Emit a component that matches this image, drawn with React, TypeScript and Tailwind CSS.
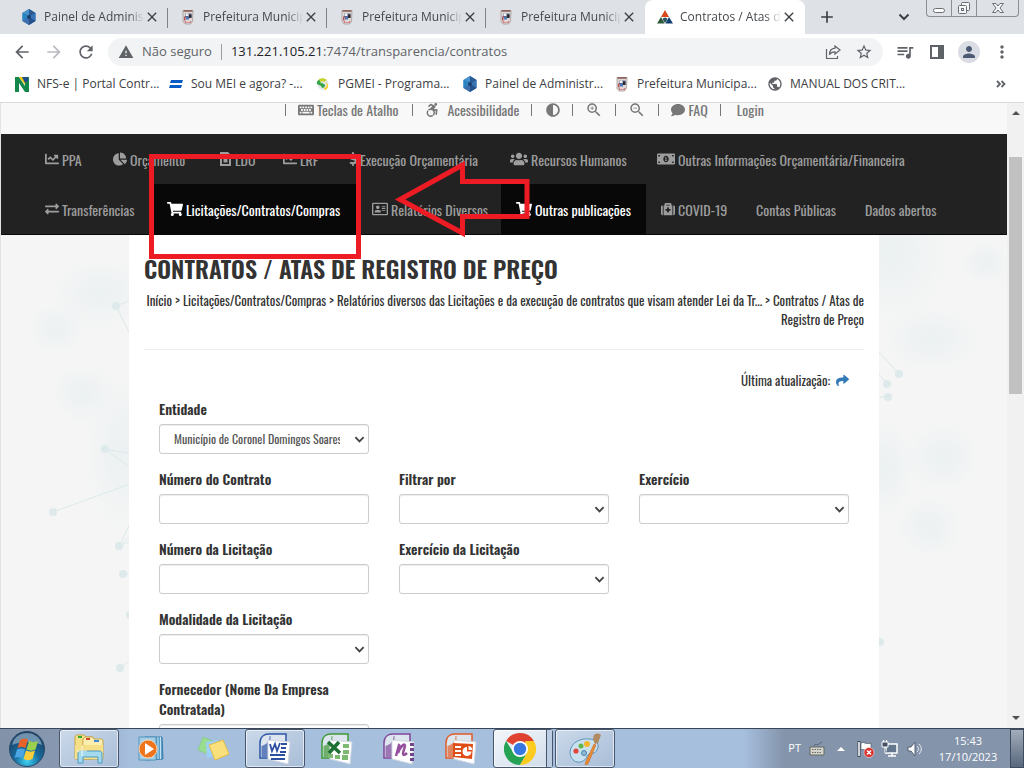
import type { ReactNode } from "react";
import {
  FaAccessibleIcon,
  FaAdjust,
  FaChartLine,
  FaChartPie,
  FaComment,
  FaDollarSign,
  FaExchangeAlt,
  FaKeyboard,
  FaMedkit,
  FaMoneyBillAlt,
  FaRegAddressCard,
  FaShare,
  FaShoppingCart,
  FaUsers,
} from "react-icons/fa";
import {
  MdAdd,
  MdArrowBack,
  MdArrowForward,
  MdClose,
  MdMoreVert,
  MdPerson,
  MdPublic,
  MdQueueMusic,
  MdRefresh,
  MdStarBorder,
  MdWarning,
  MdZoomIn,
  MdZoomOut,
} from "react-icons/md";

/* ---------- small drawings ---------- */

function HexIcon() {
  return (
    <svg viewBox="0 0 16 16" className="size-4 shrink-0">
      <path d="M8 0 1.500 4v8L8 16l6.500-4V4z" fill="#2a70b3" />
      <path d="M8 0v7L1.500 4z" fill="#4593cc" />
      <path d="M8 0v7l6.500-3z" fill="#2b5a94" />
      <path d="M14.500 4v8L8 8z" fill="#3b74b4" />
      <path d="M1.500 4v8L8 8z" fill="#2a86c2" />
      <path d="M8 16V8l-6.500 4z" fill="#3d6fae" />
      <path d="M8 16V8l6.500 4z" fill="#24508c" />
      <path d="M8 5.800 6.200 7v2L8 10.200 9.800 9V7z" fill="#1d3f6c" />
    </svg>
  );
}

function CrestIcon() {
  return (
    <svg viewBox="0 0 16 16" className="size-4 shrink-0">
      <path d="M3 1.500h10l-.500 11-2 2.500H5l-2-2.500z" fill="#ded9d6" stroke="#a39a97" strokeWidth=".8" />
      <path d="M3.500 1h9v1.800h-9z" fill="#8c6561" />
      <path d="M5 4.500h6.500v4H5z" fill="#5d6887" />
      <path d="M5.500 4.500h3v2.500h-3z" fill="#f2f4f8" />
      <path d="M9 5.500h2.500V9H9z" fill="#2d2b35" />
      <path d="M6 8h3v2.500H6z" fill="#4d77b8" />
      <path d="M4 7.500h1.500v4H4z" fill="#b4505a" />
      <path d="M4.500 12c2 1 5 1 7 0l-1 2h-5z" fill="#c25660" />
      <path d="M6 12.400h4v1H6z" fill="#f3eded" />
    </svg>
  );
}

function TriangleIcon() {
  return (
    <svg viewBox="0 0 16 16" className="size-4 shrink-0">
      <path d="M8 1l4 7H4z" fill="#d9481c" />
      <path d="M4 8l3.600 6.500H0z" fill="#2e5a3a" />
      <path d="M12 8l4 6.500H8.400z" fill="#10406f" />
      <path d="M5.600 9.500 8 8.500l2.400 1L9.500 12 8 14l-1.500-2z" fill="#2b5560" />
    </svg>
  );
}

function NIcon() {
  return (
    <svg viewBox="0 0 16 16" className="size-4 shrink-0">
      <path d="M1 1h4l6 9V1h4v15h-4L5 7v9H1z" fill="#13884a" />
      <path d="M5 1h7v9z" fill="#f2c500" />
      <path d="M8 1h6v4l-3 2z" fill="#1f4e8c" />
      <path d="M11 7h4v9h-4z" fill="#13884a" />
    </svg>
  );
}

function MeiIcon() {
  return (
    <svg viewBox="0 0 16 16" className="size-4 shrink-0">
      <path d="M3 4h12l-1 3H2zM2 9h12l-1 3H1z" fill="#0a5bc4" />
    </svg>
  );
}

function SimplesIcon() {
  return (
    <svg viewBox="0 0 16 16" className="size-4 shrink-0">
      <circle cx="8" cy="8.500" r="5.500" fill="#e4e8ea" />
      <path d="M2 8c-1-3 2-5 5-5L5.500 6.500 9 8c2 1 1 4-2 4l-1-2z" fill="#35a64a" />
      <path d="M4 3c2-1 6-1 8 1L9 6C7 5 6 5 5.500 7z" fill="#c7d42e" />
      <path d="M9 12c3 0 3-3 2-6 3 2 3 7-1 8z" fill="#f4cf22" />
    </svg>
  );
}

function ShareOut() {
  return (
    <svg viewBox="0 0 16 16" className="size-4" fill="none" stroke="#5f6368" strokeWidth="1.200">
      <path d="M1.500 5v9.500h11V12" />
      <path d="M10 2l5 4-5 4V7.800c-3 0-4.500 1-5.500 3 0-4 2-6.300 5.500-6.600z" />
    </svg>
  );
}

function LawIcon() {
  return (
    <svg viewBox="0 0 14 14" className="size-[14px]" fill="currentColor">
      <path d="M2 0h8l3 3v11H2zM4 4v8h7V4z" fillRule="evenodd" />
      <path d="M5.500 5.500h4v5h-4z" />
    </svg>
  );
}

function Chevron({ className }: { className: string }) {
  return (
    <svg viewBox="0 0 12 12" className={className} fill="none" stroke="currentColor" strokeWidth="2">
      <path d="M1.500 3.500 6 8l4.500-4.500" />
    </svg>
  );
}

/* ---------- browser chrome ---------- */

const tabs = [
  { title: "Painel de Adminis", icon: <HexIcon />, active: false },
  { title: "Prefeitura Municip", icon: <CrestIcon />, active: false },
  { title: "Prefeitura Municip", icon: <CrestIcon />, active: false },
  { title: "Prefeitura Municip", icon: <CrestIcon />, active: false },
  { title: "Contratos / Atas d", icon: <TriangleIcon />, active: true },
];

function TabStrip() {
  return (
    <div className="flex h-[34px] shrink-0 bg-[#dee1e6] pl-[9px]">
      {tabs.map((t, i) => (
        <div
          key={i}
          className={
            t.active
              ? "flex w-40 items-center rounded-t-lg bg-white pl-3 pr-2"
              : "relative flex w-[159px] items-center pl-3 pr-2"
          }
        >
          {t.icon}
          <span className="ml-[7px] min-w-0 flex-1 overflow-hidden whitespace-nowrap text-[12px] text-[#45494d] [mask-image:linear-gradient(to_right,black_84%,transparent)]">
            {t.title}
          </span>
          <button aria-label="Fechar guia" className="text-[#3c4043]">
            <MdClose className="size-4" />
          </button>
          {!t.active && i < 3 && <span className="absolute right-0 top-2 h-5 w-px bg-[#808387]" />}
        </div>
      ))}
      <button aria-label="Nova guia" className="ml-3 text-[#3c4043]">
        <MdAdd className="size-5" />
      </button>
      <button aria-label="Pesquisar guias" className="ml-auto mr-4 text-[#3c4043]">
        <Chevron className="size-3" />
      </button>
      <div className="mr-[5px] flex h-[17px] rounded-b border border-t-0 border-[#8b8e94] text-[#6b6e74]">
        <button aria-label="Minimizar" className="flex w-[25px] items-center justify-center border-r border-[#8b8e94]">
          <span className="mt-1 h-[5px] w-3 rounded-sm border border-[#6b6e74] bg-white" />
        </button>
        <button aria-label="Restaurar" className="flex w-[25px] items-center justify-center border-r border-[#8b8e94]">
          <svg viewBox="0 0 14 14" className="size-[14px]" fill="#f4f5f7" stroke="currentColor">
            <rect x="4.500" y="1.500" width="8" height="8" rx="1" />
            <rect x="1.500" y="4.500" width="8" height="8" rx="1" />
            <rect x="4.500" y="7.500" width="2" height="2" />
          </svg>
        </button>
        <button aria-label="Fechar" className="flex w-[41px] items-center justify-center">
          <svg viewBox="0 0 14 12" className="h-3 w-[14px]" fill="#f4f5f7" stroke="currentColor">
            <path d="M1.500 1.500h3.500l2 2.500 2-2.500h3.500L9 6l3.500 4.500H9L7 8l-2 2.500H1.500L5 6z" />
          </svg>
        </button>
      </div>
    </div>
  );
}

function Toolbar() {
  return (
    <div className="flex h-[36px] shrink-0 items-center pl-3 pr-3 text-[#5f6368]">
      <button aria-label="Voltar"><MdArrowBack className="size-5" /></button>
      <button aria-label="Avançar" className="ml-3 text-[#b9bbbe]"><MdArrowForward className="size-5" /></button>
      <button aria-label="Recarregar" className="ml-3"><MdRefresh className="size-5" /></button>
      <div className="ml-3 flex h-7 min-w-0 flex-1 items-center rounded-full bg-[#f1f3f4] pl-[10px] pr-[10px]">
        <MdWarning className="size-4 shrink-0" />
        <span className="ml-2 shrink-0 text-[13px]">Não seguro</span>
        <span className="mx-[9px] h-4 w-px shrink-0 bg-[#9a9da1]" />
        <span className="min-w-0 flex-1 truncate text-[13px]">
          <span className="text-[#202124]">131.221.105.21</span>:7474/transparencia/contratos
        </span>
        <button aria-label="Compartilhar"><ShareOut /></button>
        <button aria-label="Favorito" className="ml-[14px]"><MdStarBorder className="size-[18px]" /></button>
      </div>
      <button aria-label="Mídia" className="ml-3"><MdQueueMusic className="size-5" /></button>
      <button aria-label="Painel lateral" className="ml-[14px]">
        <svg viewBox="0 0 16 16" className="size-4">
          <path d="M1 1h14v14H1zM3 3v10h6V3z" fill="currentColor" fillRule="evenodd" />
        </svg>
      </button>
      <button aria-label="Perfil" className="ml-[13px] flex size-[22px] items-center justify-center rounded-full bg-[#dadde3] text-[#4c5a73]">
        <MdPerson className="size-[18px]" />
      </button>
      <button aria-label="Menu" className="ml-3"><MdMoreVert className="size-5" /></button>
    </div>
  );
}

const bookmarks = [
  { label: "NFS-e | Portal Contr...", icon: <NIcon />, width: "w-[154px]" },
  { label: "Sou MEI e agora? -...", icon: <MeiIcon />, width: "w-[147px]" },
  { label: "PGMEI - Programa...", icon: <SimplesIcon />, width: "w-[147px]" },
  { label: "Painel de Administr...", icon: <HexIcon />, width: "w-[152px]" },
  { label: "Prefeitura Municipa...", icon: <CrestIcon />, width: "w-[153px]" },
  { label: "MANUAL DOS CRIT...", icon: <MdPublic className="size-4 shrink-0 text-[#5f6368]" />, width: "w-[150px]" },
];

function BookmarkBar() {
  return (
    <div className="flex h-[33px] shrink-0 items-center border-b border-[#d8dadd] pb-1 pl-[14px] pr-[18px] text-[12px] text-[#3c4043]">
      {bookmarks.map((b) => (
        <a key={b.label} href="#" className={`${b.width} flex items-center gap-[7px] whitespace-nowrap`}>
          {b.icon}
          {b.label}
        </a>
      ))}
      <button aria-label="Mais favoritos" className="ml-auto text-[#5f6368]">
        <svg viewBox="0 0 10 10" className="size-[10px]" fill="none" stroke="currentColor" strokeWidth="1.800">
          <path d="M1 2l3 3-3 3M5.500 2l3 3-3 3" />
        </svg>
      </button>
    </div>
  );
}

/* ---------- site ---------- */

function AccessBar() {
  const sep = <span className="h-3 w-px bg-[#777]" />;
  return (
    <div className="h-[31px]">
      <div className="flex h-[14px] items-center gap-3 pl-[284px] text-[14px] leading-[14px] text-[#777]">
        {sep}
        <a href="#" className="flex items-center gap-[3px]"><FaKeyboard className="size-4" />Teclas de Atalho</a>
        <span className="ml-[2px] h-3 w-px bg-[#777]" />
        <a href="#" className="flex items-center gap-2"><FaAccessibleIcon className="size-[14px]" />Acessibilidade</a>
        {sep}
        <button aria-label="Contraste" className="ml-[2px]"><FaAdjust className="size-[14px]" /></button>
        {sep}
        <button aria-label="Aumentar fonte"><MdZoomIn className="size-[18px]" /></button>
        {sep}
        <button aria-label="Diminuir fonte"><MdZoomOut className="size-[18px]" /></button>
        {sep}
        <a href="#" className="flex items-center gap-[3px]"><FaComment className="size-[14px]" />FAQ</a>
        {sep}
        <a href="#" className="ml-1">Login</a>
      </div>
    </div>
  );
}

type NavItem = { label: string; icon?: ReactNode; active?: boolean; width: string };

const navRows: NavItem[][] = [
  [
    { label: "PPA", icon: <FaChartLine />, width: "w-[68px]" },
    { label: "Orçamento", icon: <FaChartPie />, width: "w-[105px]" },
    { label: "LDO", icon: <LawIcon />, width: "w-[65px]" },
    { label: "LRF", icon: <FaChartLine />, width: "w-[66px]" },
    { label: "Execução Orçamentária", icon: <FaDollarSign className="-mx-[3px]" />, width: "w-[161px]" },
    { label: "Recursos Humanos", icon: <FaUsers className="size-[18px]" />, width: "w-[147px]" },
    { label: "Outras Informações Orçamentária/Financeira", icon: <FaMoneyBillAlt className="size-[18px]" />, width: "w-[282px]" },
  ],
  [
    { label: "Transferências", icon: <FaExchangeAlt />, width: "w-[122px]" },
    { label: "Licitações/Contratos/Compras", icon: <FaShoppingCart className="size-4" />, active: true, width: "w-[205px]" },
    { label: "Relatórios Diversos", icon: <FaRegAddressCard className="size-4" />, width: "w-[144px]" },
    { label: "Outras publicações", icon: <FaShoppingCart className="size-4" />, active: true, width: "w-[145px]" },
    { label: "COVID-19", icon: <FaMedkit />, width: "w-[95px]" },
    { label: "Contas Públicas", width: "w-[109px]" },
    { label: "Dados abertos", width: "w-[102px]" },
  ],
];

function MainNav() {
  return (
    <nav className="border-b border-[#080808] bg-[#222] px-[29px]">
      {navRows.map((row, i) => (
        <ul key={i} className="flex h-[50px]">
          {row.map((n) => (
            <li key={n.label} className={n.width}>
              <a
                href="#"
                className={
                  n.active
                    ? "flex h-full items-center gap-[3px] whitespace-nowrap bg-[#080808] pl-[15px] text-[14px] text-white"
                    : "flex h-full items-center gap-[3px] whitespace-nowrap pl-[15px] text-[14px] text-[#9d9d9d]"
                }
              >
                {n.icon}
                {n.label}
              </a>
            </li>
          ))}
        </ul>
      ))}
    </nav>
  );
}

function Field({ id, label, options }: { id: string; label: string; options?: string[] }) {
  const box = "h-[30px] w-full rounded-[3px] border border-[#ccc] bg-white text-[12px] text-[#555] shadow-[inset_0_1px_1px_rgba(0,0,0,0.075)]";
  return (
    <div>
      <label htmlFor={id} className="mb-[5px] block text-[14px] font-semibold leading-5">{label}</label>
      {options ? (
        <div className="relative">
          <select id={id} className={`${box} appearance-none pl-[14px] pr-7`}>
            {options.map((o) => <option key={o}>{o}</option>)}
          </select>
          <Chevron className="pointer-events-none absolute right-1 top-[10px] size-[11px] text-[#444]" />
        </div>
      ) : (
        <input id={id} type="text" className={`${box} px-[10px]`} />
      )}
    </div>
  );
}

function Network() {
  return (
    <svg viewBox="0 0 1006 625" preserveAspectRatio="xMidYMin slice" className="absolute inset-0 size-full">
      <defs>
        <radialGradient id="haze">
          <stop offset="0" stopColor="#e8eff1" stopOpacity=".75" />
          <stop offset="1" stopColor="#e8eff1" stopOpacity="0" />
        </radialGradient>
      </defs>
      <g fill="url(#haze)">
        <ellipse cx="55" cy="226" rx="30" ry="26" />
        <ellipse cx="100" cy="190" rx="50" ry="36" />
        <ellipse cx="82" cy="291" rx="34" ry="30" />
        <ellipse cx="120" cy="350" rx="36" ry="80" />
        <ellipse cx="890" cy="150" rx="60" ry="70" />
        <ellipse cx="985" cy="160" rx="26" ry="22" />
        <ellipse cx="930" cy="236" rx="50" ry="34" />
        <ellipse cx="885" cy="365" rx="30" ry="50" />
        <ellipse cx="942" cy="354" rx="40" ry="36" />
        <ellipse cx="928" cy="424" rx="34" ry="32" />
      </g>
      <g stroke="#dce9e9" fill="none">
        <path d="M115 203l20 40M115 203l20-8M104 346l40 7M104 346l40 30M52 409l85-31M118 443l20-40M118 443l26-24M118 443l24-10M122 471h20M119 565l20-16M898 271l-30-33M886 281l-20-25M887 294h-20" />
      </g>
      <g fill="#dde9ea">
        <circle cx="115" cy="203" r="4" />
        <circle cx="104" cy="346" r="4" />
        <circle cx="52" cy="409" r="4" />
        <circle cx="118" cy="443" r="4" />
        <circle cx="122" cy="471" r="4" />
        <circle cx="129" cy="512" r="4" />
        <circle cx="119" cy="565" r="4" />
        <circle cx="898" cy="271" r="4" />
        <circle cx="886" cy="281" r="4" />
        <circle cx="887" cy="294" r="4" />
        <circle cx="879" cy="539" r="4" />
      </g>
    </svg>
  );
}

function Site() {
  return (
    <div className="relative min-w-0 flex-1 overflow-hidden border-l border-[#e2e3e4] bg-[#f5f5f5] font-['Oswald','Liberation_Sans_Narrow','Arial_Narrow',sans-serif] text-[#333]">
      <Network />
      <div className="relative">
        <div className="bg-[#f8f8f8]"><AccessBar /></div>
        <MainNav />
        <main className="mx-auto w-full max-w-[750px] bg-white px-[15px] pb-4 pt-5">
          <h1 className="text-[24px] font-semibold leading-[26px]">CONTRATOS / ATAS DE REGISTRO DE PREÇO</h1>
          <p className="mt-[10px] text-right text-[13px] leading-[19px]">
            <a href="#">Início</a> &gt; <a href="#">Licitações/Contratos/Compras</a> &gt;{" "}
            <a href="#">Relatórios diversos das Licitações e da execução de contratos que visam atender Lei da Tr...</a> &gt; Contratos / Atas de Registro de Preço
          </p>
          <hr className="mt-5 border-[#eee]" />
          <div className="px-[15px] pt-5">
            <p className="flex items-center justify-end gap-[6px] text-[13px] leading-5">
              Última atualização: <a href="#" aria-label="Atualizar"><FaShare className="size-[13px] text-[#337ab7]" /></a>
            </p>
            <form className="mt-[9px] grid grid-cols-3 gap-x-[30px] gap-y-[15px]">
              <Field id="entidade" label="Entidade" options={["Município de Coronel Domingos Soares"]} />
              <div className="col-span-2" />
              <Field id="contrato" label="Número do Contrato" />
              <Field id="filtrar" label="Filtrar por" options={[""]} />
              <Field id="exercicio" label="Exercício" options={[""]} />
              <Field id="licitacao" label="Número da Licitação" />
              <Field id="exlicitacao" label="Exercício da Licitação" options={[""]} />
              <div />
              <Field id="modalidade" label="Modalidade da Licitação" options={[""]} />
              <div className="col-span-2" />
              <Field id="fornecedor" label="Fornecedor (Nome Da Empresa Contratada)" />
            </form>
          </div>
        </main>
      </div>
    </div>
  );
}

function ScrollBar() {
  return (
    <div className="flex w-[17px] shrink-0 flex-col items-center bg-[#f1f1f1] py-2">
      <span className="border-x-4 border-b-4 border-x-transparent border-b-[#505050]" />
      <span className="mt-[42px] h-[237px] w-[13px] bg-[#c1c1c1]" />
      <span className="mt-auto border-x-4 border-t-4 border-x-transparent border-t-[#505050]" />
    </div>
  );
}

/* ---------- taskbar ---------- */

function StartOrb() {
  return (
    <svg viewBox="0 0 38 38" className="size-[38px]">
      <defs>
        <radialGradient id="orb" cx=".5" cy=".85" r=".8">
          <stop offset="0" stopColor="#3fd0f4" />
          <stop offset=".45" stopColor="#176a9c" />
          <stop offset="1" stopColor="#1c3f63" />
        </radialGradient>
      </defs>
      <circle cx="19" cy="19" r="17.500" fill="url(#orb)" stroke="#284a68" />
      <path d="M4 15C6 6 13 3 19 3s13 3 15 12c-9-4-21-4-30 0z" fill="#a9c5d8" opacity=".6" />
      <path d="M12 10c3-2 5-2 8-.500l-2.500 8.500c-3-1.500-5-1.500-8 0z" fill="#e8632a" />
      <path d="M21 11c3 1.500 6 1.500 9 0l-2.500 8.500c-3 1.500-6 1.500-9 0z" fill="#9bcf4c" />
      <path d="M9 19.500c3-1.500 5-1.500 8 0L14.500 28c-3-1.500-5-1.500-8 0z" fill="#4ea5e4" />
      <path d="M18 20.500c3 1.500 6 1.500 9 0L24.500 29c-3 1.500-6 1.500-9 0z" fill="#fccd3a" />
    </svg>
  );
}

function ExplorerIcon() {
  return (
    <svg viewBox="0 0 32 32" className="size-8">
      <path d="M2 4c0-1 1-2 2-2h7l2 2h6v22H2z" fill="#f5df87" stroke="#c6a546" />
      <path d="M10 6l2-2h8l1 2h6c2 0 3 0 3 2v18H9z" fill="#fbeeae" stroke="#c6a546" />
      <path d="M2 12h28v14H2z" fill="#f5df87" />
      <path d="M5 3h4v2H5z" fill="#2faa37" />
      <path d="M13 5h4v2h-4z" fill="#d2432d" />
      <path d="M21 7h5v2h-5z" fill="#3c8ad2" />
      <path d="M5 30V21c0-2 1-3 3-3h18c2 0 3 1 3 3v9h-4v-6H10v6z" fill="#a4d9ee" stroke="#4d9cc3" />
      <path d="M9 13v10M4 18h10" stroke="#fff" opacity=".8" />
    </svg>
  );
}

function MediaIcon() {
  return (
    <svg viewBox="0 0 32 32" className="size-8">
      <path d="M10 4h17l1 22-18 1z" fill="#5b9fc9" stroke="#397ba8" />
      <path d="M23 4v22M25.500 4v22" stroke="#c6e3f3" />
      <path d="M4 4h17v23H4z" fill="#a3d0e8" stroke="#5594bd" />
      <circle cx="13" cy="16" r="9" fill="#ee731d" stroke="#fbd0a6" />
      <path d="M10 10l9 6-9 6z" fill="#fff" />
    </svg>
  );
}

function NotesIcon() {
  return (
    <svg viewBox="0 0 32 32" className="size-8">
      <path d="M6 4l12 5-5 13L1 17z" fill="#99dd90" stroke="#7cc673" strokeWidth=".5" />
      <path d="M9 9l12-2 2 15-13 3z" fill="#9ed0f7" />
      <path d="M12 12l14-5 6 14-14 6z" fill="#f9e07c" stroke="#e4bd43" />
    </svg>
  );
}

function OfficeIcon({ color, children }: { color: string; children: ReactNode }) {
  return (
    <svg viewBox="0 0 32 32" className="size-8">
      <path d="M1 25V10C1 4 5 1 10 1h17v24z" fill="#dde5ef" stroke={color} strokeWidth="1.500" />
      <path d="M2.500 24V13c4-1 8-4 8-10h1v21z" fill={color} opacity=".7" />
      <path d="M9 7l22 2-2 22-20-5z" fill="#fff" stroke="#d3d9e2" />
      {children}
    </svg>
  );
}

function ChromeIcon() {
  return (
    <svg viewBox="0 0 32 32" className="size-8">
      <path d="M16 16L2.140 8A16 16 0 0 1 29.860 8z" fill="#df4230" />
      <path d="M2.140 8A16 16 0 0 0 16 32l7-12-14-1z" fill="#25a253" />
      <path d="M29.860 8A16 16 0 0 1 16 32l7-12-2-12z" fill="#fccb1f" />
      <circle cx="16" cy="16" r="8" fill="#fff" />
      <circle cx="16" cy="16" r="6.200" fill="#3777e0" />
    </svg>
  );
}

function PaintIcon() {
  return (
    <svg viewBox="0 0 32 32" className="size-8">
      <path d="M1 19C2 9 12 5 20 6c8 0 11 6 8 11-4 6-8 2-10 6-1 3-4 7-10 6-4-1-7-5-7-10z" fill="#c9e1ef" stroke="#5c93b7" />
      <circle cx="7" cy="18" r="2.600" fill="#e0463a" />
      <circle cx="12" cy="13" r="2.500" fill="#63b548" />
      <circle cx="18" cy="11" r="3" fill="#f3b52a" />
      <circle cx="15" cy="20" r="2.500" fill="#8fb8d1" stroke="#4c86ad" />
      <path d="M25 11l2 1-8 19-3 1 1-4z" fill="#ea8a33" stroke="#b9621b" strokeWidth=".5" />
      <path d="M25 2c2-2 5-2 7 0l-3 8-3 1c-1-3-3-5-1-9z" fill="#b18a62" />
    </svg>
  );
}

const apps: { name: string; framed: boolean; icon: ReactNode }[] = [
  { name: "Windows Explorer", framed: true, icon: <ExplorerIcon /> },
  { name: "Media Player", framed: false, icon: <MediaIcon /> },
  { name: "Notas", framed: false, icon: <NotesIcon /> },
  {
    name: "Word",
    framed: true,
    icon: (
      <OfficeIcon color="#2d55a5">
        <path d="M11 11l2 7 3-7 2 7 3-8M22 11h6M22 15h5M21 19h6M11 22h15M12 26h14" stroke="#2d4fa0" strokeWidth="1.800" fill="none" />
      </OfficeIcon>
    ),
  },
  {
    name: "Excel",
    framed: false,
    icon: (
      <OfficeIcon color="#3e9a35">
        <path d="M7 21h5v4H7zM14 22h5v4h-5zM21 22h6v5h-6zM22 11h6v4h-6zM22 17h6v4h-6z" fill="#7db971" />
        <path d="M7 9l12 11M18 9L8 20" stroke="#1f7033" strokeWidth="3.500" />
      </OfficeIcon>
    ),
  },
  {
    name: "OneNote",
    framed: false,
    icon: (
      <OfficeIcon color="#80489a">
        <path d="M13 23l3-11c2 1 0 5-1 8 2-6 7-11 7-7l-2 7c0 3 2 2 4 0" stroke="#95509e" strokeWidth="2.500" fill="none" />
        <path d="M29 10v18" stroke="#70458a" strokeWidth="4" strokeDasharray="3 2" />
      </OfficeIcon>
    ),
  },
  {
    name: "PowerPoint",
    framed: false,
    icon: (
      <OfficeIcon color="#e05c27">
        <path d="M8 10l20 1-1 15-19-2z" fill="#e04e17" />
        <path d="M10 14h6M10 18h6M10 22h6" stroke="#fff" strokeWidth="2" />
        <path d="M22 14a4.500 4.500 0 1 0 4.500 4.500H22z" fill="#fff" />
        <path d="M23.500 13v4h4c0-2-2-4-4-4z" fill="#fff" />
      </OfficeIcon>
    ),
  },
  { name: "Chrome", framed: true, icon: <ChromeIcon /> },
  { name: "Paint", framed: true, icon: <PaintIcon /> },
];

function Taskbar() {
  return (
    <footer className="flex h-10 shrink-0 items-stretch border-t border-[#39465a] bg-[linear-gradient(to_right,#8292a9_0px,#8798b0_60px,#a6bfdd_130px,#a6bfdd_calc(100%-280px),#8494ab_calc(100%-240px))] font-['Open_Sans','Noto_Sans',sans-serif]">
      <button aria-label="Iniciar" className="ml-2 mr-[13px] flex w-[38px] items-center"><StartOrb /></button>
      <div className="flex gap-[2px]">
        {apps.map((a) => (
          <button
            key={a.name}
            aria-label={a.name}
            className={
              a.framed
                ? `flex w-[60px] items-center justify-center rounded-[3px] border border-[#47566c] shadow-[inset_0_0_0_1px_rgba(255,255,255,0.6)] ${a.name === "Chrome" ? "relative bg-gradient-to-br from-[#f4f7fb] to-[#cfdbea] pr-[6px]" : "bg-gradient-to-br from-[#cbd9ea] to-[#a8bdd7]"}`
                : "flex w-[60px] items-center justify-center"
            }
          >
            {a.icon}
            {a.name === "Chrome" && <span className="absolute inset-y-0 right-0 w-[6px] border-l border-[#47566c] bg-[#bccde2]" />}
          </button>
        ))}
      </div>
      <div className="ml-auto flex items-center text-white">
        <span className="text-[11px]">PT</span>
        <svg viewBox="0 0 16 16" className="ml-2 size-4">
          <path d="M1 6h14v8H1z" fill="#d4d4cd" stroke="#666960" />
          <path d="M3 8.500h10M3 11.500h10" stroke="#6c6f66" strokeDasharray="1.500 1" />
          <path d="M5 5c0-3 4 0 5-2s2-1 3-2" stroke="#5d6570" fill="none" />
        </svg>
        <span className="ml-3 border-x-4 border-b-4 border-x-transparent border-b-white" />
        <svg viewBox="0 0 18 18" className="ml-3 size-[18px]">
          <path d="M2 1v16" stroke="#3f4b59" strokeWidth="3" />
          <path d="M2 2v14" stroke="#fff" strokeWidth="1.500" />
          <path d="M4 3c3-2 4 2 10 0v7c-5 2-7-2-10 0z" fill="#fff" stroke="#4b5765" strokeWidth=".7" />
          <circle cx="12" cy="12.500" r="5" fill="#d9302c" stroke="#fff" strokeWidth=".5" />
          <path d="M10 10.500l4 4m0-4l-4 4" stroke="#fff" strokeWidth="1.500" />
        </svg>
        <svg viewBox="0 0 18 18" className="ml-[6px] size-[18px]">
          <path d="M5 4h11v9H5z" fill="#63768c" stroke="#fff" strokeWidth="1.500" />
          <path d="M7 16h8M11 13v3" stroke="#fff" strokeWidth="1.500" />
          <path d="M1 2h6v5H1zM4 7v6h2M2.500 0v2M5.500 0v2" fill="#445264" stroke="#fff" />
        </svg>
        <svg viewBox="0 0 16 16" className="ml-2 size-4">
          <path d="M1 6h3l4-5v14l-4-5H1z" fill="#fff" stroke="#536173" />
          <path d="M10 5c2 2 2 4 0 6M12 3c3 3 3 7 0 10" stroke="#e9eef5" fill="none" />
        </svg>
        <time className="ml-[14px] w-[62px] text-center text-[11px] leading-4">15:43 17/10/2023</time>
        <button aria-label="Mostrar área de trabalho" className="ml-[11px] h-full w-[14px] border border-[#3f4b5e] bg-gradient-to-b from-[#a3adbb] to-[#59687e]" />
      </div>
    </footer>
  );
}

function Annotations() {
  return (
    <svg
      width="1024"
      height="768"
      className="pointer-events-none absolute left-0 top-0"
      fill="none"
      stroke="#ed1c24"
      strokeWidth="5"
      aria-hidden="true"
    >
      <path d="M151.500 156.500h207v100h-207z" />
      <path d="M400 199.500L462.500 165v16.500H527v35h-64.500V233z" />
    </svg>
  );
}

export default function App() {
  return (
    <div className="relative flex h-screen flex-col overflow-hidden bg-white font-['Open_Sans','Noto_Sans',sans-serif]">
      <TabStrip />
      <Toolbar />
      <BookmarkBar />
      <div className="flex min-h-0 flex-1">
        <Site />
        <ScrollBar />
      </div>
      <Taskbar />
      <Annotations />
    </div>
  );
}
